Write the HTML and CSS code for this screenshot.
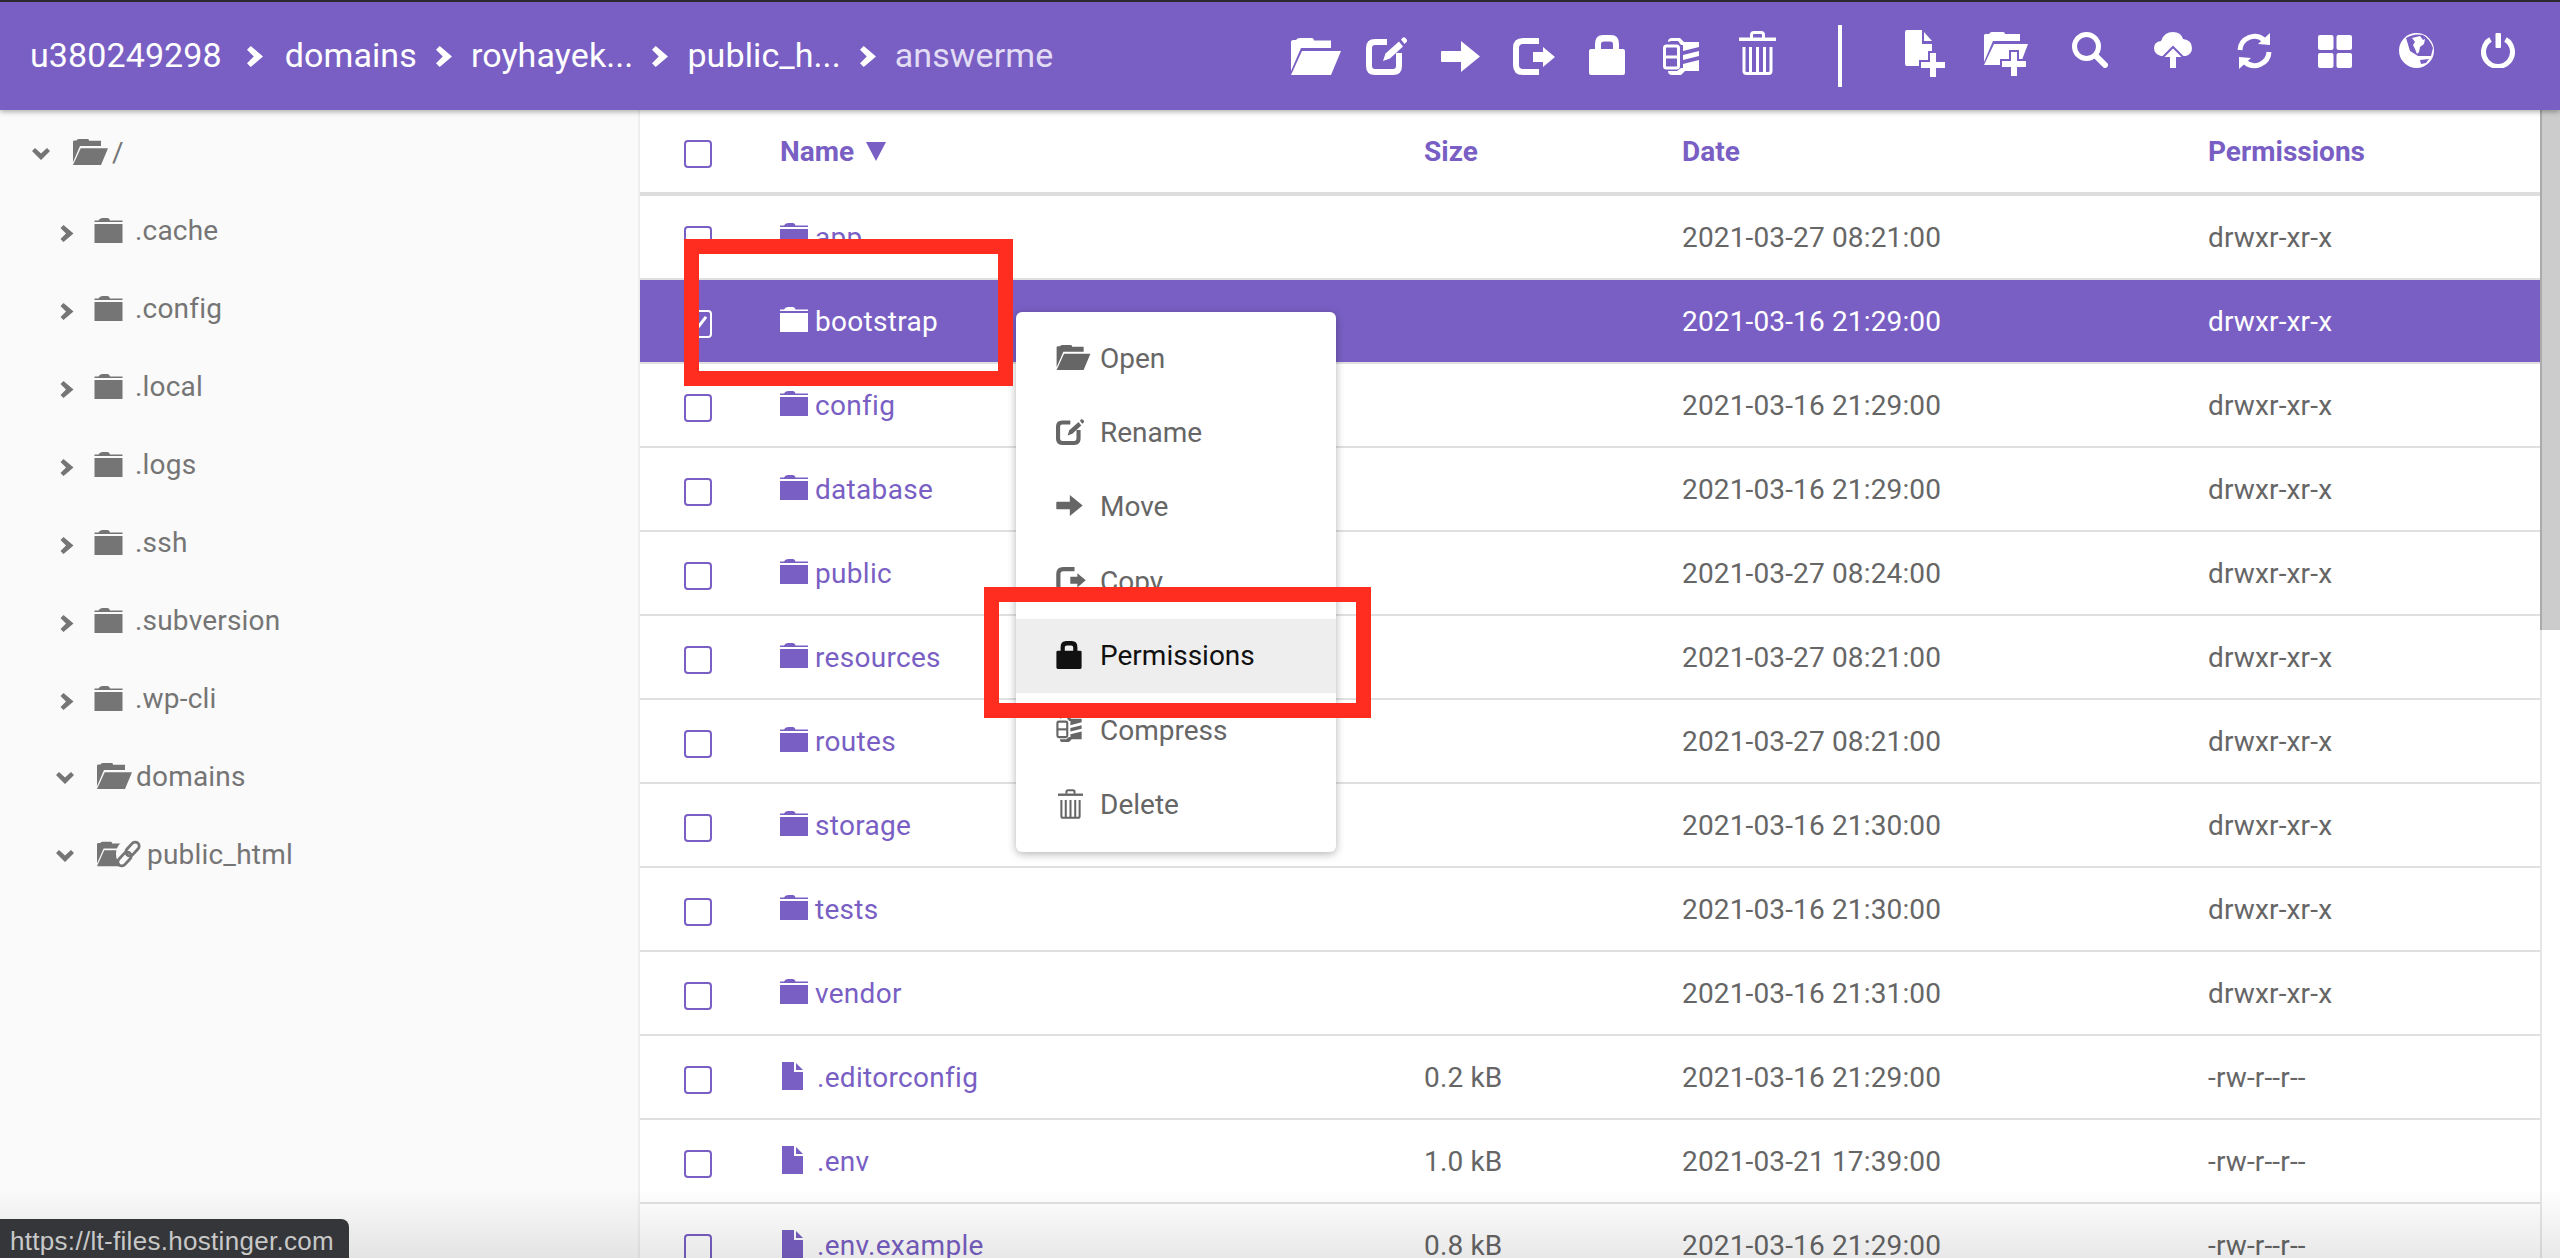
FILE: index.html
```html
<!DOCTYPE html>
<html lang="en">
<head>
  <meta charset="UTF-8">
  <title>File Manager</title>
  <link rel="stylesheet" href="styles.css">
</head>
<body>

  <!-- icon sprite -->
  <svg class="sprite" xmlns="http://www.w3.org/2000/svg">
    <symbol id="i-open" viewBox="0 0 50 37">
      <path d="M0 3.5Q0 2 2.5 2H5Q6 0 9 0H21Q23 0 23 2.5H40V10H10L0 33Z"/>
      <path d="M11 13H50L40 37H0Z"/>
    </symbol>
    <symbol id="i-folder" viewBox="0 0 28 25">
      <path d="M0 2.5H4Q5 0 8 0H13Q15 0 15.5 2.5H28V4H0Z"/>
      <path d="M0 6H28V25H0Z"/>
    </symbol>
    <symbol id="i-file" viewBox="0 0 21 28">
      <path d="M0 0H12V10H21V28H0Z"/>
      <path d="M14 1L21 8H14Z"/>
    </symbol>
    <symbol id="i-rename" viewBox="0 0 41 38">
      <path d="M21 5H9Q3 5 3 11V29Q3 35 9 35H27Q33 35 33 29V16" fill="none" stroke="currentColor" stroke-width="6"/>
      <path d="M17 24L19.5 16.5L33 4.5L37 9.5L24 21.5Z"/>
      <path d="M35 2.5L37 .5Q38 0 39.5 1L41 3Q41.500 4 40.500 5L38.500 7Z"/>
    </symbol>
    <symbol id="i-move" viewBox="0 0 39 31">
      <path d="M1 10H20V0L39 15.500L20 31V21H1Q0 21 0 20V11Q0 10 1 10Z"/>
    </symbol>
    <symbol id="i-copy" viewBox="0 0 42 37">
      <path d="M26 3H10Q3 3 3 10V27Q3 34 10 34H26" fill="none" stroke="currentColor" stroke-width="6"/>
      <path d="M20 14H30V9L42 19L30 29V24H20Z"/>
    </symbol>
    <symbol id="i-lock" viewBox="0 0 36 40">
      <path fill-rule="evenodd" d="M2 14H6V9Q6 0 14 0H22Q30 0 30 9V14H34Q36 14 36 16V38Q36 40 34 40H2Q0 40 0 38V16Q0 14 2 14ZM12 14H24V9Q24 6.500 21 6.500H15Q12 6.500 12 9Z"/>
    </symbol>
    <symbol id="i-compress" viewBox="0 0 36 37">
      <rect x="1.500" y="8" width="14" height="22" rx="2" fill="none" stroke="currentColor" stroke-width="3"/>
      <path d="M2 17.500H15V20.500H2Z"/>
      <path d="M5 4Q5 0 9 0H17L21 4H36V9L20 13V7H18L15 3H8Z"/>
      <path d="M20 17L36 13V18L20 22Z"/>
      <path d="M20 26L36 22V33H22L18 37H9Q5 37 5 33H14L18 30H20Z"/>
    </symbol>
    <symbol id="i-trash" viewBox="0 0 37 44">
      <path d="M12.500 7V4Q12.500 1.500 15 1.500H22Q24.500 1.500 24.500 4V7" fill="none" stroke="currentColor" stroke-width="3"/>
      <path d="M0 6.500H37V10H0Z"/>
      <path d="M5 16V40Q5 42.500 7.500 42.500H29.500Q32 42.500 32 40V16M11.500 16V42M18.500 16V42M25.500 16V42" fill="none" stroke="currentColor" stroke-width="3"/>
    </symbol>
    <symbol id="i-newfile" viewBox="0 0 41 48">
      <path d="M2 0H17V14H27V36H2Q0 36 0 34V2Q0 0 2 0Z"/>
      <path d="M19 2L27 11H19Z"/>
      <path d="M24 22H32V31H41V39H32V48H24V39H15V31H24Z" stroke="#795fc4" stroke-width="2"/>
    </symbol>
    <symbol id="i-newfolder" viewBox="0 0 44 45">
      <path d="M0 3Q0 2 2 2H5Q6 0 8 0H19Q21 0 21 2H36V9H9L0 30Z"/>
      <path d="M10 12H44L36 33H0Z"/>
      <path d="M26 19H34V28H43V36H34V45H26V36H17V28H26Z" stroke="#795fc4" stroke-width="2"/>
    </symbol>
    <symbol id="i-search" viewBox="0 0 36 36">
      <circle cx="14.500" cy="14.500" r="12" fill="none" stroke="currentColor" stroke-width="5"/>
      <path d="M24 24L33 33" fill="none" stroke="currentColor" stroke-width="6" stroke-linecap="round"/>
    </symbol>
    <symbol id="i-upload" viewBox="0 0 38 36">
      <path d="M7 24Q0 22 0 16Q0 10 7 9Q10 0 19 0Q27 0 29 7Q38 8 38 16Q38 22 32 24Z"/>
      <path d="M19 15L30 26H23V36H15V26H8Z" stroke="#795fc4" stroke-width="2"/>
      <path d="M16 27H22V36H16Z"/>
    </symbol>
    <symbol id="i-refresh" viewBox="0 0 35 36">
      <path d="M3 17A14.500 14.500 0 0 1 27 7M32 19A14.500 14.500 0 0 1 8 29" fill="none" stroke="currentColor" stroke-width="5"/>
      <path d="M33 0V12L21 11Z"/>
      <path d="M2 36V24L14 25Z"/>
    </symbol>
    <symbol id="i-grid" viewBox="0 0 34 33">
      <rect width="15.500" height="15" rx="2"/>
      <rect x="18.500" width="15.500" height="15" rx="2"/>
      <rect y="18" width="15.500" height="15" rx="2"/>
      <rect x="18.500" y="18" width="15.500" height="15" rx="2"/>
    </symbol>
    <symbol id="i-globe" viewBox="0 0 35 35">
      <circle cx="17.500" cy="17.500" r="17.500"/>
      <path fill="#795fc4" d="M7 5Q15 0 24 2Q31 6 34 15L32 23H19L11 18Z"/>
      <path d="M13 5L21 3L24 7L26 6L25 11L21 14L20 19L18 21L16 16L14 12L16 9Z"/>
      <path d="M21 27L30 26L27 30L22 31Z" fill="#795fc4"/>
    </symbol>
    <symbol id="i-power" viewBox="0 0 34 35">
      <path d="M9.500 6.500A14.500 14.500 0 1 0 24.500 6.500" fill="none" stroke="currentColor" stroke-width="5"/>
      <rect x="14.500" width="5.500" height="15" rx="1"/>
    </symbol>
    <symbol id="i-right" viewBox="0 0 13 17">
      <path d="M0 3L3 0L13 8.500L3 17L0 14L5.500 8.500Z"/>
    </symbol>
    <symbol id="i-down" viewBox="0 0 18 12">
      <path d="M0 3L3 0L9 5.500L15 0L18 3L9 12Z"/>
    </symbol>
    <symbol id="i-link" viewBox="0 0 25 28">
      <ellipse cx="12.500" cy="14" rx="12.500" ry="14" fill="#fafafa"/>
      <g fill="none" stroke="#757575" stroke-width="2.800">
        <rect x="-4" y="-8" width="8" height="16" rx="4" transform="translate(16.500 9) rotate(42)"/>
        <rect x="-4" y="-8" width="8" height="16" rx="4" transform="translate(8.500 19) rotate(42)"/>
      </g>
    </symbol>
  </svg>

  <header class="topbar">
    <nav class="crumbs">
      <a class="crumb">u380249298</a>
      <svg class="crumb-sep first"><use href="#i-right"/></svg>
      <a class="crumb">domains</a>
      <svg class="crumb-sep"><use href="#i-right"/></svg>
      <a class="crumb">royhayek...</a>
      <svg class="crumb-sep"><use href="#i-right"/></svg>
      <a class="crumb">public_h...</a>
      <svg class="crumb-sep"><use href="#i-right"/></svg>
      <span class="crumb current">answerme</span>
    </nav>

    <div class="tools tools-selection">
      <span class="tool"><svg class="t-open"><use href="#i-open"/></svg></span>
      <span class="tool"><svg class="t-rename"><use href="#i-rename"/></svg></span>
      <span class="tool"><svg class="t-move"><use href="#i-move"/></svg></span>
      <span class="tool"><svg class="t-copy"><use href="#i-copy"/></svg></span>
      <span class="tool"><svg class="t-lock"><use href="#i-lock"/></svg></span>
      <span class="tool"><svg class="t-compress"><use href="#i-compress"/></svg></span>
      <span class="tool"><svg class="t-trash"><use href="#i-trash"/></svg></span>
    </div>
    <div class="divider"></div>
    <div class="tools tools-global">
      <span class="tool"><svg class="t-newfile"><use href="#i-newfile"/></svg></span>
      <span class="tool"><svg class="t-newfolder"><use href="#i-newfolder"/></svg></span>
      <span class="tool"><svg class="t-search"><use href="#i-search"/></svg></span>
      <span class="tool"><svg class="t-upload"><use href="#i-upload"/></svg></span>
      <span class="tool"><svg class="t-refresh"><use href="#i-refresh"/></svg></span>
      <span class="tool"><svg class="t-grid"><use href="#i-grid"/></svg></span>
      <span class="tool"><svg class="t-globe"><use href="#i-globe"/></svg></span>
      <span class="tool"><svg class="t-power"><use href="#i-power"/></svg></span>
    </div>
  </header>

  <div class="content">
    <aside class="tree">
      <div class="node root"><svg class="tw-down"><use href="#i-down"/></svg><span class="node-icon open"><svg class="ic-open"><use href="#i-open"/></svg></span><span class="node-label">/</span></div>
      <div class="node"><svg class="tw-right"><use href="#i-right"/></svg><span class="node-icon"><svg class="ic-closed"><use href="#i-folder"/></svg></span><span class="node-label">.cache</span></div>
      <div class="node"><svg class="tw-right"><use href="#i-right"/></svg><span class="node-icon"><svg class="ic-closed"><use href="#i-folder"/></svg></span><span class="node-label">.config</span></div>
      <div class="node"><svg class="tw-right"><use href="#i-right"/></svg><span class="node-icon"><svg class="ic-closed"><use href="#i-folder"/></svg></span><span class="node-label">.local</span></div>
      <div class="node"><svg class="tw-right"><use href="#i-right"/></svg><span class="node-icon"><svg class="ic-closed"><use href="#i-folder"/></svg></span><span class="node-label">.logs</span></div>
      <div class="node"><svg class="tw-right"><use href="#i-right"/></svg><span class="node-icon"><svg class="ic-closed"><use href="#i-folder"/></svg></span><span class="node-label">.ssh</span></div>
      <div class="node"><svg class="tw-right"><use href="#i-right"/></svg><span class="node-icon"><svg class="ic-closed"><use href="#i-folder"/></svg></span><span class="node-label">.subversion</span></div>
      <div class="node"><svg class="tw-right"><use href="#i-right"/></svg><span class="node-icon"><svg class="ic-closed"><use href="#i-folder"/></svg></span><span class="node-label">.wp-cli</span></div>
      <div class="node"><svg class="tw-down"><use href="#i-down"/></svg><span class="node-icon open"><svg class="ic-open"><use href="#i-open"/></svg></span><span class="node-label">domains</span></div>
      <div class="node"><svg class="tw-down"><use href="#i-down"/></svg><span class="node-icon wide"><svg class="ic-open-small"><use href="#i-open"/></svg><svg class="ic-link"><use href="#i-link"/></svg></span><span class="node-label">public_html</span></div>
    </aside>

    <main class="files">
      <div class="row head">
        <span class="check"></span>
        <span class="col-name">Name <i class="sort"></i></span>
        <span>Size</span>
        <span>Date</span>
        <span>Permissions</span>
      </div>
      <div class="row">
        <span class="check"></span>
        <a class="col-name"><svg class="ic-folder"><use href="#i-folder"/></svg>app</a>
        <span></span><span>2021-03-27 08:21:00</span><span>drwxr-xr-x</span>
      </div>
      <div class="row selected">
        <span class="check checked"></span>
        <a class="col-name"><svg class="ic-folder"><use href="#i-folder"/></svg>bootstrap</a>
        <span></span><span>2021-03-16 21:29:00</span><span>drwxr-xr-x</span>
      </div>
      <div class="row">
        <span class="check"></span>
        <a class="col-name"><svg class="ic-folder"><use href="#i-folder"/></svg>config</a>
        <span></span><span>2021-03-16 21:29:00</span><span>drwxr-xr-x</span>
      </div>
      <div class="row">
        <span class="check"></span>
        <a class="col-name"><svg class="ic-folder"><use href="#i-folder"/></svg>database</a>
        <span></span><span>2021-03-16 21:29:00</span><span>drwxr-xr-x</span>
      </div>
      <div class="row">
        <span class="check"></span>
        <a class="col-name"><svg class="ic-folder"><use href="#i-folder"/></svg>public</a>
        <span></span><span>2021-03-27 08:24:00</span><span>drwxr-xr-x</span>
      </div>
      <div class="row">
        <span class="check"></span>
        <a class="col-name"><svg class="ic-folder"><use href="#i-folder"/></svg>resources</a>
        <span></span><span>2021-03-27 08:21:00</span><span>drwxr-xr-x</span>
      </div>
      <div class="row">
        <span class="check"></span>
        <a class="col-name"><svg class="ic-folder"><use href="#i-folder"/></svg>routes</a>
        <span></span><span>2021-03-27 08:21:00</span><span>drwxr-xr-x</span>
      </div>
      <div class="row">
        <span class="check"></span>
        <a class="col-name"><svg class="ic-folder"><use href="#i-folder"/></svg>storage</a>
        <span></span><span>2021-03-16 21:30:00</span><span>drwxr-xr-x</span>
      </div>
      <div class="row">
        <span class="check"></span>
        <a class="col-name"><svg class="ic-folder"><use href="#i-folder"/></svg>tests</a>
        <span></span><span>2021-03-16 21:30:00</span><span>drwxr-xr-x</span>
      </div>
      <div class="row">
        <span class="check"></span>
        <a class="col-name"><svg class="ic-folder"><use href="#i-folder"/></svg>vendor</a>
        <span></span><span>2021-03-16 21:31:00</span><span>drwxr-xr-x</span>
      </div>
      <div class="row">
        <span class="check"></span>
        <a class="col-name"><svg class="ic-file"><use href="#i-file"/></svg>.editorconfig</a>
        <span>0.2 kB</span><span>2021-03-16 21:29:00</span><span>-rw-r--r--</span>
      </div>
      <div class="row">
        <span class="check"></span>
        <a class="col-name"><svg class="ic-file"><use href="#i-file"/></svg>.env</a>
        <span>1.0 kB</span><span>2021-03-21 17:39:00</span><span>-rw-r--r--</span>
      </div>
      <div class="row">
        <span class="check"></span>
        <a class="col-name"><svg class="ic-file"><use href="#i-file"/></svg>.env.example</a>
        <span>0.8 kB</span><span>2021-03-16 21:29:00</span><span>-rw-r--r--</span>
      </div>
    </main>

    <div class="scrollbar"><div class="thumb"></div></div>
  </div>

  <!-- things lying over the page -->
  <ul class="context-menu">
    <li><span class="menu-icon"><svg class="m-open"><use href="#i-open"/></svg></span>Open</li>
    <li><span class="menu-icon"><svg class="m-rename"><use href="#i-rename"/></svg></span>Rename</li>
    <li><span class="menu-icon"><svg class="m-move"><use href="#i-move"/></svg></span>Move</li>
    <li><span class="menu-icon"><svg class="m-copy"><use href="#i-copy"/></svg></span>Copy</li>
    <li class="hover"><span class="menu-icon"><svg class="m-lock"><use href="#i-lock"/></svg></span>Permissions</li>
    <li><span class="menu-icon"><svg class="m-compress"><use href="#i-compress"/></svg></span>Compress</li>
    <li><span class="menu-icon"><svg class="m-trash"><use href="#i-trash"/></svg></span>Delete</li>
  </ul>

  <div class="callout callout-row"></div>
  <div class="callout callout-menu"></div>

  <div class="bottom-fade"></div>
  <div class="status-link">https://lt-files.hostinger.com</div>

</body>
</html>
```

FILE: styles.css
```css
/* Page */
html, body {
  height: 100%;
}

body {
  margin: 0;
  position: relative;
  overflow: hidden;
  display: flex;
  flex-direction: column;
  font-family: Roboto, "Liberation Sans", sans-serif;
  font-size: 28px;
  color: #666;
  background-color: #fff;
}

.sprite {
  display: none;
}

svg {
  display: block;
  fill: currentColor;
  flex: none;
}

/* Top bar */
.topbar {
  flex: none;
  height: 108px;
  display: flex;
  align-items: center;
  padding-right: 23px;
  background-color: #795fc4;
  border-top: 2px solid #2c2830;
  color: #fff;
  box-shadow: 0 2px 5px rgba(0, 0, 0, 0.3);
  position: relative;
  z-index: 2;
}

.crumbs {
  display: flex;
  align-items: center;
  margin-right: auto;
  padding-left: 30px;
  margin-top: -2px;
}

.crumb {
  font-size: 34px;
  letter-spacing: 0.1px;
}

.crumb.current {
  color: #e2dcf4;
}

.crumb-sep {
  width: 16px;
  height: 21px;
  margin: 2px 19px 0 19px;
}

.crumb-sep.first {
  margin: 2px 22px 0 25px;
}

.tools {
  display: flex;
  align-items: center;
  height: 60px;
  margin-top: -4px;
}

.tools .tool {
  display: flex;
  justify-content: center;
  align-items: center;
}

.tools-selection .tool {
  width: 73.5px;
}

.tools-global .tool {
  width: 81.5px;
}

.divider {
  width: 4px;
  height: 62px;
  margin: 0 43px 0 44px;
  background-color: #fff;
}

.t-open { width: 50px; height: 37px; margin-top: 5px; }
.t-rename { width: 41px; height: 38px; margin: 4px 6px 0 0; }
.t-move { width: 39px; height: 31px; margin: 5px 6px 0 0; }
.t-copy { width: 42px; height: 37px; margin: 5px 6px 0 0; }
.t-lock { width: 36px; height: 40px; margin: 2px 6px 0 0; }
.t-compress { width: 36px; height: 37px; margin: 5px 6px 0 0; }
.t-trash { width: 37px; height: 44px; margin-top: -2px; }
.t-newfile { width: 41px; height: 48px; }
.t-newfolder { width: 44px; height: 45px; margin: 1px 2px 0 0; }
.t-search { width: 36px; height: 36px; margin: -8px 0 0 3px; }
.t-upload { width: 38px; height: 36px; margin: -8px 0 0 6px; }
.t-refresh { width: 35px; height: 36px; margin: -6px 0 0 6px; }
.t-grid { width: 34px; height: 33px; margin: -5px 0 0 4px; }
.t-globe { width: 35px; height: 35px; margin: -7px 0 0 4px; }
.t-power { width: 34px; height: 35px; margin: -7px 0 0 4px; }

/* Content: tree, file list, scrollbar */
.content {
  flex: 1;
  min-height: 0;
  display: flex;
}

.tree {
  flex: none;
  width: 638px;
  padding-top: 3px;
  background-color: #fafafa;
  border-right: 2px solid #eee;
  color: #757575;
}

.node {
  display: flex;
  align-items: center;
  height: 78px;
  padding-left: 53px;
}

.node.root {
  padding-left: 29px;
}

.tw-right {
  width: 14px;
  height: 17px;
  margin: 6px 20px 0 7px;
}

.tw-down {
  width: 18px;
  height: 12px;
  margin: 4px 23px 0 3px;
}

.node-icon {
  display: flex;
  width: 41px;
  position: relative;
}

.node-icon.open {
  width: 39px;
}

.node-icon.wide {
  width: 50px;
}

.ic-closed {
  width: 29px;
  height: 25px;
}

.ic-open {
  width: 35px;
  height: 26px;
}

.ic-open-small {
  width: 33px;
  height: 26px;
}

.ic-link {
  position: absolute;
  left: 19px;
  top: -1px;
  width: 25px;
  height: 28px;
}

.node-label {
  letter-spacing: 0.2px;
}

/* File list */
.files {
  flex: 1;
  min-width: 0;
  letter-spacing: 0.15px;
}

.row {
  display: grid;
  grid-template-columns: 140px 644px 258px 526px 1fr;
  align-items: center;
  height: 82px;
  border-bottom: 2px solid #e0e0e0;
}

.row.head {
  height: 82px;
  border-bottom: 4px solid #ddd;
  color: #795fc4;
  font-weight: 700;
  letter-spacing: 0;
}

.col-name {
  display: flex;
  align-items: center;
  color: #795fc4;
  letter-spacing: 0.3px;
}

.head .col-name {
  letter-spacing: 0;
}

.ic-folder {
  width: 28px;
  height: 25px;
  margin: 0 7px 3px 0;
}

.ic-file {
  width: 21px;
  height: 28px;
  margin: 0 14px 3px 2px;
}

.sort {
  width: 0;
  height: 0;
  margin-left: 12px;
  border-left: 10px solid transparent;
  border-right: 10px solid transparent;
  border-top: 19px solid #795fc4;
}

.check {
  box-sizing: border-box;
  width: 28px;
  height: 28px;
  margin: 6px 0 0 44px;
  border: 2px solid #795fc4;
  border-radius: 4px;
}

.row.selected {
  background-color: #795fc4;
  color: #fff;
}

.selected .col-name {
  color: #fff;
}

.selected .check {
  border-color: #fff;
  position: relative;
}

.check.checked::after {
  content: "";
  position: absolute;
  left: 13px;
  top: 3px;
  width: 3px;
  height: 18px;
  background-color: #fff;
  transform: rotate(38deg);
}

/* Scrollbar */
.scrollbar {
  flex: none;
  box-sizing: border-box;
  width: 20px;
  border-left: 2px solid #e6e6e6;
}

.thumb {
  height: 520px;
  margin-left: -2px;
  background-color: #ccc;
  border-left: 2px solid #aaa;
}

/* Context menu */
.context-menu {
  position: absolute;
  left: 1016px;
  top: 312px;
  width: 320px;
  margin: 0;
  padding: 9px 0 10px;
  list-style: none;
  background-color: #fff;
  border-radius: 6px;
  box-shadow: 0 2px 8px rgba(0, 0, 0, 0.3);
  z-index: 3;
}

.context-menu li {
  display: flex;
  align-items: center;
  height: 74.400px;
  padding-left: 40px;
}

.context-menu li.hover {
  background-color: #eee;
  color: #111;
}

.menu-icon {
  display: flex;
  width: 44px;
}

.m-open { width: 35px; height: 25px; margin-top: -2px; }
.m-rename { width: 28px; height: 26px; margin-top: -2px; }
.m-move { width: 27px; height: 21px; margin-top: -2px; }
.m-copy { width: 30px; height: 26px; margin-top: -2px; }
.m-lock { width: 26px; height: 28px; margin-top: -2px; }
.m-compress { width: 26px; height: 26px; margin-top: -2px; }
.m-trash { width: 25px; height: 30px; margin: -2px 0 0 2px; }

/* Red callouts drawn on the screenshot */
.callout {
  position: absolute;
  box-sizing: border-box;
  border: 15px solid #ff2d20;
  z-index: 4;
}

.callout-row {
  left: 684px;
  top: 239px;
  width: 329px;
  height: 147px;
}

.callout-menu {
  left: 984px;
  top: 587px;
  width: 387px;
  height: 131px;
}

/* Browser bits at the bottom */
.bottom-fade {
  position: absolute;
  left: 0;
  right: 0;
  bottom: 0;
  height: 70px;
  background-image: linear-gradient(rgba(0, 0, 0, 0), rgba(0, 0, 0, 0.09));
  z-index: 5;
}

.status-link {
  position: absolute;
  left: 0;
  bottom: 0;
  box-sizing: border-box;
  width: 349px;
  height: 39px;
  padding: 7px 0 0 10px;
  background-color: #35363a;
  border-top-right-radius: 8px;
  color: #c8c8c8;
  font-family: "Liberation Sans", sans-serif;
  font-size: 26px;
  letter-spacing: 0.3px;
  white-space: nowrap;
  z-index: 6;
}
```
